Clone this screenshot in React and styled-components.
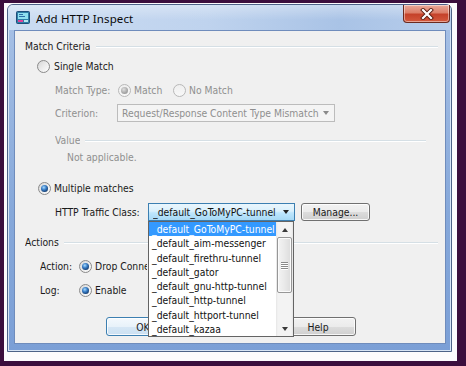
import React from "react";
import styled, { createGlobalStyle, css } from "styled-components";

const Global = createGlobalStyle`
  html, body { margin: 0; padding: 0; }
  body { background: #3b0e3d; width: 466px; height: 366px; overflow: hidden; }
  * { box-sizing: border-box; }
`;

const UI_FONT = `"DejaVu Sans Condensed", "Liberation Sans", sans-serif`;

const Backdrop = styled.div`
  width: 466px;
  height: 366px;
  background: #3b0e3d;
  padding: 3px 0 0 4px;
`;

const Shot = styled.div`
  width: 453px;
  height: 358px;
  background: #fcfbfd;
  padding: 1px 5px 9px 3px;
`;

const Window = styled.div`
  width: 445px;
  height: 348px;
  border: 1px solid #4d6288;
  border-radius: 6px 6px 0 0;
  background: linear-gradient(180deg, #a9c2e6 0%, #86a8da 60%, #7b9fd6 100%);
  display: flex;
  flex-direction: column;
  box-shadow: inset 0 0 0 1px #d7e4f5;
`;

const TitleBar = styled.div`
  height: 25px;
  display: flex;
  align-items: center;
  padding-left: 8px;
  border-radius: 5px 5px 0 0;
  background:
    linear-gradient(180deg, rgba(255,255,255,0.35) 0%, rgba(255,255,255,0) 60%),
    linear-gradient(90deg, #cadcf2 0%, #bfd3ee 45%, #a9c3e6 75%, #b7cdeb 100%);
  font-family: "Noto Sans", "Open Sans", sans-serif;
  font-size: 11.5px;
  color: #0a0a0a;
`;

const TitleText = styled.span`
  margin-left: 6px;
  margin-top: 1px;
  letter-spacing: 0.1px;
`;

const CloseBtn = styled.div`
  margin-left: auto;
  margin-right: 1px;
  align-self: flex-start;
  width: 47px;
  height: 18px;
  border: 1px solid #6b2a1f;
  border-top: none;
  border-radius: 0 0 4px 4px;
  background: linear-gradient(180deg, #e9a99a 0%, #dc7f69 45%, #c5422a 55%, #d4593d 100%);
  box-shadow: inset 0 0 0 1px rgba(255,255,255,0.45);
  display: flex;
  align-items: center;
  justify-content: center;
`;

const Content = styled.div`
  flex: 1;
  margin: 0 5px 7px 6px;
  background: #f0f0f0;
  border: 1px solid #6f8cbc;
  display: flex;
  flex-direction: column;
  font-family: ${UI_FONT};
  font-size: 10.3px;
  color: #1a1a1a;
`;

const Row = styled.div`
  display: flex;
  align-items: center;
  height: ${(p) => p.$h || 16}px;
  margin-top: ${(p) => p.$top || 0}px;
  padding-left: ${(p) => p.$indent || 0}px;
  position: relative;
`;

const Label = styled.span`
  width: ${(p) => (p.$w ? `${p.$w}px` : "auto")};
  flex: none;
  color: ${(p) => (p.$disabled ? "#8f8f8f" : "#1a1a1a")};
  white-space: nowrap;
  overflow: hidden;
`;

const GroupLine = styled.div`
  flex: 1;
  height: 2px;
  margin-left: ${(p) => p.$gap || 6}px;
  margin-right: ${(p) => p.$right || 7}px;
  border-top: 1px solid #d5dfe5;
  border-bottom: 1px solid #ffffff;
  margin-top: 1px;
`;

const RadioCircle = styled.span`
  width: 13px;
  height: 13px;
  flex: none;
  border-radius: 50%;
  border: 1px solid ${(p) => (p.$disabled ? "#b8b8b8" : "#8a8a8a")};
  background: ${(p) =>
    p.$disabled
      ? "linear-gradient(180deg, #efefef, #f8f8f8)"
      : "linear-gradient(135deg, #d6d6d6 0%, #ececec 50%, #fdfdfd 100%)"};
  display: flex;
  align-items: center;
  justify-content: center;
  margin-right: ${(p) => p.$gap ?? 4}px;
  &::after {
    content: "";
    display: ${(p) => (p.$checked ? "block" : "none")};
    width: 7px;
    height: 7px;
    border-radius: 50%;
    background: ${(p) =>
      p.$disabled
        ? "radial-gradient(circle at 40% 35%, #e0e0e0 0, #a9a9a9 55%, #8a8a8a 100%)"
        : "radial-gradient(circle at 40% 35%, #a9dcff 0, #3a7fc8 38%, #0f3465 80%)"};
  }
`;

const Option = styled.span`
  display: inline-flex;
  align-items: center;
  width: ${(p) => (p.$w ? `${p.$w}px` : "auto")};
  flex: none;
  color: ${(p) => (p.$disabled ? "#8f8f8f" : "#1a1a1a")};
  white-space: nowrap;
`;

const Arrow = styled.span`
  width: 0;
  height: 0;
  flex: none;
  border-left: 3.5px solid transparent;
  border-right: 3.5px solid transparent;
  ${(p) =>
    p.$up
      ? css`border-bottom: 4px solid ${p.$color || "#222"};`
      : css`border-top: 4px solid ${p.$color || "#222"};`}
`;

const Combo = styled.div`
  width: ${(p) => p.$w}px;
  height: 18px;
  flex: none;
  display: flex;
  align-items: center;
  padding: 0 5px 0 4px;
  position: relative;
  ${(p) =>
    p.$active
      ? css`
          border: 1px solid #3c7fb1;
          background: linear-gradient(180deg, #eaf6fd 0%, #d9f0fc 45%, #bee6fd 55%, #a7d9f5 100%);
          color: #111;
        `
      : css`
          border: 1px solid #bcbcbc;
          background: #f4f4f4;
          color: #8f8f8f;
        `}
`;

const ComboText = styled.span`
  flex: 1;
  line-height: 16px;
  white-space: nowrap;
  overflow: hidden;
`;

const Button = styled.div`
  width: ${(p) => p.$w}px;
  height: ${(p) => p.$h || 19}px;
  flex: none;
  border: 1px solid ${(p) => (p.$default ? "#3c7fb1" : "#707070")};
  border-radius: 3px;
  background: ${(p) =>
    p.$default
      ? "linear-gradient(180deg, #f4f9fd 0%, #e8f2fa 50%, #d6e7f5 50%, #cbe0f2 100%)"
      : "linear-gradient(180deg, #f2f2f2 0%, #ebebeb 50%, #dddddd 50%, #cfcfcf 100%)"};
  box-shadow: inset 0 0 0 1px rgba(255, 255, 255, 0.8);
  display: flex;
  align-items: center;
  justify-content: center;
  color: #1a1a1a;
  margin-left: ${(p) => p.$ml || 0}px;
`;

const ButtonRow = styled.div`
  display: flex;
  justify-content: center;
  gap: 100px;
  margin-top: ${(p) => p.$top}px;
  padding-left: 1px;
`;

const DropList = styled.div`
  position: absolute;
  left: -1px;
  top: 17px;
  width: 146px;
  height: 116px;
  border: 1px solid #646464;
  background: #ffffff;
  display: flex;
  z-index: 5;
`;

const Items = styled.div`
  flex: 1;
  display: flex;
  flex-direction: column;
`;

const Item = styled.div`
  height: 14.25px;
  line-height: 14px;
  padding-left: 3px;
  white-space: nowrap;
  overflow: hidden;
  color: ${(p) => (p.$selected ? "#ffffff" : "#111")};
  background: ${(p) => (p.$selected ? "#3399ff" : "transparent")};
`;

const ScrollBar = styled.div`
  width: 17px;
  flex: none;
  display: flex;
  flex-direction: column;
  background: linear-gradient(90deg, #e6e6e6 0, #f3f3f3 2px, #f3f3f3 15px, #e6e6e6 100%);
`;

const ScrollBtn = styled.div`
  height: 15px;
  flex: none;
  display: flex;
  align-items: center;
  justify-content: center;
`;

const Track = styled.div`
  flex: 1;
  position: relative;
`;

const Thumb = styled.div`
  position: absolute;
  top: 0;
  left: 1px;
  width: 15px;
  height: 56px;
  border: 1px solid #979797;
  border-radius: 2px;
  background: linear-gradient(90deg, #f4f4f4 0%, #e9e9e9 50%, #dcdcdc 100%);
  box-shadow: inset 0 0 0 1px #fbfbfb;
  display: flex;
  flex-direction: column;
  align-items: center;
  justify-content: center;
  gap: 1px;
`;

const Grip = styled.span`
  width: 7px;
  height: 1px;
  background: #8a8a8a;
  box-shadow: 0 1px 0 #ffffff;
`;

const items = [
  "_default_GoToMyPC-tunnel",
  "_default_aim-messenger",
  "_default_firethru-tunnel",
  "_default_gator",
  "_default_gnu-http-tunnel",
  "_default_http-tunnel",
  "_default_httport-tunnel",
  "_default_kazaa",
];

function AppIcon() {
  return (
    <svg width="14" height="13" viewBox="0 0 14 13">
      <rect x="0.5" y="0.5" width="13" height="12" rx="1" fill="#2e7fa8" stroke="#1d4d78" />
      <rect x="2" y="2" width="10" height="6" fill="#8fe0ef" />
      <rect x="3" y="3" width="4" height="1" fill="#2e6fa8" />
      <rect x="3" y="5" width="6" height="1" fill="#2e6fa8" />
      <rect x="2" y="9" width="5" height="2" fill="#e0409a" />
      <rect x="8" y="9" width="4" height="2" fill="#b5e6f0" />
    </svg>
  );
}

function CloseX() {
  return (
    <svg width="14" height="12" viewBox="0 0 14 12">
      <path d="M3 2 L11 10 M11 2 L3 10" stroke="#5a1d12" strokeWidth="4" strokeLinecap="square" />
      <path d="M3 2 L11 10 M11 2 L3 10" stroke="#ffffff" strokeWidth="2.2" strokeLinecap="square" />
    </svg>
  );
}

export default function App() {
  return (
    <>
      <Global />
      <Backdrop>
        <Shot>
          <Window>
            <TitleBar>
              <AppIcon />
              <TitleText>Add HTTP Inspect</TitleText>
              <CloseBtn>
                <CloseX />
              </CloseBtn>
            </TitleBar>
            <Content>
              <Row $top={7} $indent={10}>
                <Label>Match Criteria</Label>
                <GroupLine $gap={6} $right={7} />
              </Row>
              <Row $top={4} $indent={22}>
                <RadioCircle />
                <Label>Single Match</Label>
              </Row>
              <Row $top={8} $indent={40}>
                <Label $w={63} $disabled>Match Type:</Label>
                <Option $w={55} $disabled>
                  <RadioCircle $checked $disabled $gap={3} />
                  Match
                </Option>
                <Option $disabled>
                  <RadioCircle $disabled $gap={3} />
                  No Match
                </Option>
              </Row>
              <Row $top={6} $h={18} $indent={40}>
                <Label $w={62} $disabled>Criterion:</Label>
                <Combo $w={218}>
                  <ComboText>Request/Response Content Type Mismatch</ComboText>
                  <Arrow $color="#8a8a8a" />
                </Combo>
              </Row>
              <Row $top={10} $indent={40}>
                <Label $disabled>Value</Label>
                <GroupLine $gap={5} $right={19} />
              </Row>
              <Row $top={1} $indent={52}>
                <Label $disabled>Not applicable.</Label>
              </Row>
              <Row $top={15} $indent={23}>
                <RadioCircle $checked $gap={3} />
                <Label>Multiple matches</Label>
              </Row>
              <Row $top={7} $h={18} $indent={40}>
                <Label $w={93}>HTTP Traffic Class:</Label>
                <Combo $w={147} $active>
                  <ComboText>_default_GoToMyPC-tunnel</ComboText>
                  <Arrow />
                  <DropList>
                    <Items>
                      {items.map((t, i) => (
                        <Item key={t} $selected={i === 0}>
                          {t}
                        </Item>
                      ))}
                    </Items>
                    <ScrollBar>
                      <ScrollBtn>
                        <Arrow $up $color="#3a3a3a" />
                      </ScrollBtn>
                      <Track>
                        <Thumb>
                          <Grip />
                          <Grip />
                          <Grip />
                          <Grip />
                        </Thumb>
                      </Track>
                      <ScrollBtn>
                        <Arrow $color="#3a3a3a" />
                      </ScrollBtn>
                    </ScrollBar>
                  </DropList>
                </Combo>
                <Button $w={69} $h={18} $ml={6}>Manage...</Button>
              </Row>
              <Row $top={13} $indent={10}>
                <Label>Actions</Label>
                <GroupLine $gap={5} $right={7} />
              </Row>
              <Row $top={8} $indent={25}>
                <Label $w={39}>Action:</Label>
                <RadioCircle $checked $gap={3} />
                <Label $w={52}>Drop Connection</Label>
              </Row>
              <Row $top={8} $indent={25}>
                <Label $w={39}>Log:</Label>
                <RadioCircle $checked $gap={3} />
                <Label>Enable</Label>
              </Row>
              <ButtonRow $top={19}>
                <Button $w={75} $default>OK</Button>
                <Button $w={75}>Help</Button>
              </ButtonRow>
            </Content>
          </Window>
        </Shot>
      </Backdrop>
    </>
  );
}
